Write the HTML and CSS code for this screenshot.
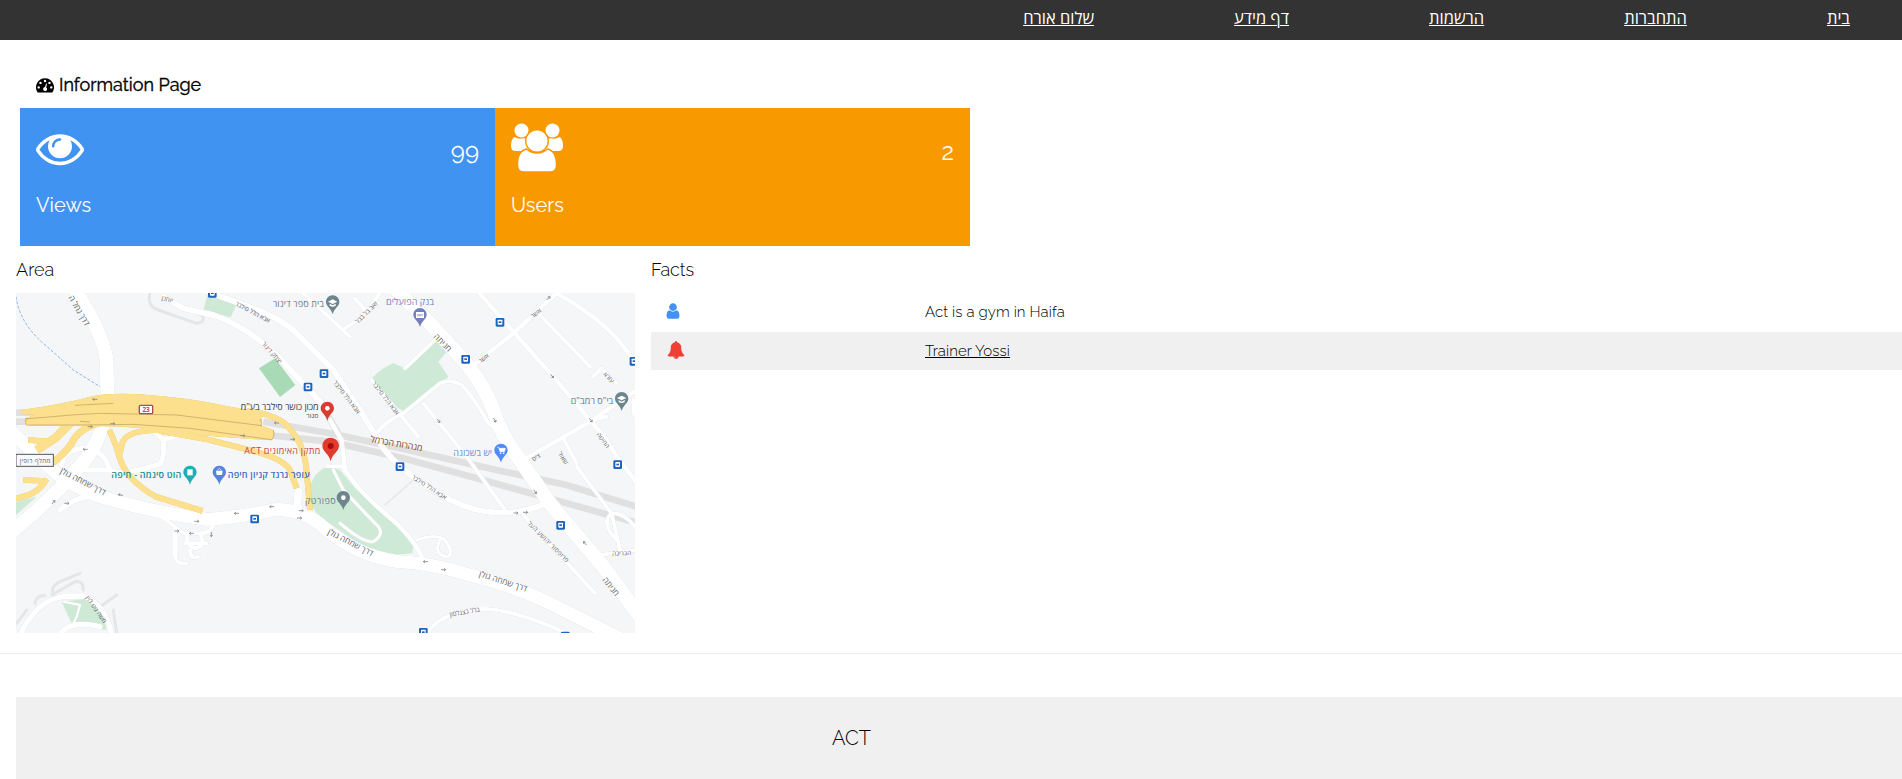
FILE: index.html
```html
<!DOCTYPE html>
<html lang="en">
<head>
<meta charset="utf-8">
<title>Information Page</title>
<link rel="stylesheet" href="styles.css">
</head>
<body>
<nav class="nav" dir="rtl">
  <a class="n1" href="#">בית</a>
  <a class="n2" href="#">התחברות</a>
  <a class="n3" href="#">הרשמות</a>
  <a class="n4" href="#">דף מידע</a>
  <a class="n5" href="#">שלום אורח</a>
</nav>

<header class="title">
  <svg class="dash" viewBox="0 0 18 15"><path fill-rule="evenodd" d="M9 .3A9 9 0 0 0 1.500 14.200Q1.700 14.600 2.200 14.600H15.800Q16.300 14.600 16.500 14.200A9 9 0 0 0 9 .3zM9 1.800a1.200 1.200 0 1 1 0 2.400 1.200 1.200 0 0 1 0-2.400zM4.500 3.700a1.200 1.200 0 1 1 0 2.400 1.200 1.200 0 0 1 0-2.400zM13.500 3.700a1.200 1.200 0 1 1 0 2.400 1.200 1.200 0 0 1 0-2.400zM2.700 8.200a1.200 1.200 0 1 1 0 2.400 1.200 1.200 0 0 1 0-2.400zM15.300 8.200a1.200 1.200 0 1 1 0 2.400 1.200 1.200 0 0 1 0-2.400zM10.100 5.500 11 5.800 10.200 9.400a2 2 0 1 1-1.200-.3z"/></svg>
  <h5>Information Page</h5>
</header>

<section class="cards">
  <div class="card blue">
    <div class="card-top">
      <svg class="eye" viewBox="0 0 1792 1792"><path d="M1664 960q-152-236-381-353 61 104 61 225 0 185-131.500 316.500t-316.500 131.500-316.500-131.500-131.500-316.500q0-121 61-225-229 117-381 353 133 205 333.500 326.500t434.500 121.500 434.500-121.500 333.500-326.500zm-720-384q0-20-14-34t-34-14q-125 0-214.500 89.500t-89.500 214.500q0 20 14 34t34 14 34-14 14-34q0-86 61-147t147-61q20 0 34-14t14-34zm848 384q0 34-20 69-140 230-376.500 368.500t-499.500 138.500-499.500-139-376.500-368q-20-35-20-69t20-69q140-229 376.500-368t499.500-139 499.500 139 376.500 368q20 35 20 69z"/></svg>
      <span class="num">99</span>
    </div>
    <h4 class="views">Views</h4>
  </div>
  <div class="card orange">
    <div class="card-top">
      <svg class="users" viewBox="0 0 52 49">
        <circle cx="10.500" cy="7.500" r="7"/><circle cx="41.500" cy="7.500" r="7"/>
        <path class="shoulders" d="M3.500 14Q7 16.500 12 15.300L18 16V28H4.500Q0 28 0 23Q0 16 3.500 14zM48.500 14Q45 16.500 40 15.300L34 16V28H47.500Q52 28 52 23Q52 16 48.500 14z"/>
        <path class="cut" d="M15.500 26Q20 30 26 30Q32 30 36.500 26Q45.500 28 45.500 42Q45.500 49 39 49H13Q6.500 49 6.500 42Q6.500 28 15.500 26z"/>
        <circle class="cut" cx="26" cy="18" r="11.300"/>
      </svg>
      <span class="num two">2</span>
    </div>
    <h4>Users</h4>
  </div>
</section>

<section class="info">
  <div class="area">
    <h5 class="sub">Area</h5>
    <svg class="map" viewBox="48 879 1857 1020">
      <defs>
        <symbol id="pin" viewBox="0 0 40 58" overflow="visible"><path d="M20 0C8 0 0 9 0 20C0 34 16 38 20 57C24 38 40 34 40 20C40 9 32 0 20 0z"/></symbol>
        <g id="bus"><rect x="-13" y="-13" width="26" height="26" rx="4" fill="#1c64c0"/><rect x="-7" y="-8" width="14" height="15" rx="2" fill="#fff"/><rect x="-4" y="-3" width="8" height="5" fill="#1c64c0"/></g>
        <path id="arr" d="M-7 0H7M2-4L7 0L2 4" fill="none" stroke="#80868b" stroke-width="2.500"/>
      </defs>
      <rect x="48" y="879" width="1857" height="1020" fill="#f5f6f7"/>
      <g fill="#ceead6">
        <path d="M622 885L655 880L712 910L692 952L610 930z"/>
        <path d="M1305 1020L1340 1055L1315 1085L1345 1130L1225 1238L1195 1225L1115 1135Q1150 1100 1180 1090L1215 1105z"/>
        <path d="M985 1400L1020 1410L1070 1470L1160 1540L1240 1630L1238 1660L1180 1665L1090 1640L960 1550Q920 1510 930 1460Q945 1410 985 1400z"/>
        <path d="M185 1805L265 1795Q320 1840 318 1890L215 1870z"/><path d="M48 1505L110 1490L48 1545z"/>
      </g>
      <path d="M825 1075L886 1155L840 1191L777 1105z" fill="#a8dab5"/>
      <path class="dashes" d="M48 890Q60 970 130 1030L220 1110L300 1160"/>
      <g class="tunnel"><path d="M48 1238H100M48 1265H100M790 1265L990 1300L1200 1345L1500 1412L1700 1455L1910 1520M800 1305L990 1325L1210 1375L1430 1435L1910 1568"/><path d="M985 1250L1015 1300" /></g>
      <g class="thin"><path d="M450 880Q440 920 475 930L590 970Q620 965 605 945L520 910M240 1720L180 1745Q150 1760 160 1785M155 1785L225 1745Q250 1740 250 1770M105 1810Q110 1785 135 1787M350 1785L300 1820M340 1830L350 1900M50 1870L80 1830"/><path stroke-width="4" d="M1155 1515L1240 1440"/></g>
      <g class="roads">
        <path stroke-width="42" d="M222 865Q310 1000 320 1080L322 1200Q315 1290 270 1360Q200 1460 30 1600"/>
        <path stroke-width="40" d="M40 1300Q90 1350 160 1412Q200 1450 300 1490Q470 1540 620 1558Q700 1555 830 1528Q920 1530 980 1590Q1080 1670 1190 1684Q1300 1690 1410 1725Q1560 1760 1710 1840L1870 1920"/>
        <path stroke-width="44" d="M1185 865L1290 970L1390 1080Q1450 1150 1480 1230Q1500 1300 1560 1380L1650 1510L1810 1700L1920 1850"/>
        <path stroke-width="18" d="M490 890L550 925L640 945Q740 980 830 1065L965 1210M650 885L760 925Q850 960 890 1000L1000 1110L1080 1230L1150 1345Q1200 1410 1270 1450Q1380 1530 1480 1537Q1560 1545 1640 1510"/>
        <path stroke-width="14" d="M1430 870L1540 995L1660 1130L1770 1260Q1830 1330 1850 1370L1920 1460M1415 1100L1540 1000L1680 870M1670 880Q1760 930 1820 985Q1860 1020 1920 1110M1570 1380L1770 1265L1910 1170"/>
        <path stroke-width="12" d="M1615 940L1770 1100M900 870L1050 1010M1035 985Q1110 940 1140 875M1065 895L1100 935M1215 1105L1310 1015M1130 1300Q1160 1260 1210 1240L1320 1150Q1350 1135 1385 1155Q1420 1190 1465 1270Q1490 1290 1520 1290M1115 1140L1255 1310M1270 1210L1400 1370L1515 1530M1570 1545L1785 1780M1280 1900Q1320 1840 1430 1828Q1520 1820 1690 1895M1780 1130L1805 1105L1850 1150M1690 1315L1730 1390M1770 1260L1820 1250M1730 1400L1835 1540L1860 1650M1835 1540Q1800 1570 1850 1620M1835 1540Q1880 1540 1910 1590M1800 1665L1910 1650M1900 1200V1240L1930 1280"/>
        <path stroke-width="14" d="M990 1260L1025 1320L1035 1410Q1080 1480 1190 1570Q1250 1630 1270 1680"/>
        <path stroke-width="10" d="M1250 1620Q1310 1600 1335 1620Q1370 1670 1335 1670Q1300 1660 1320 1620M980 1400H1030M1000 1410L1030 1470L1125 1570Q1160 1600 1120 1625Q1090 1630 1020 1570"/>
        <path stroke-width="12" d="M485 1550L550 1600H600Q635 1600 640 1570M525 1590L525 1670Q530 1695 560 1690M560 1605Q560 1640 585 1645Q620 1640 600 1600M555 1630H620M570 1650Q570 1680 595 1670M895 1470L890 1520"/>
        <path stroke-width="16" d="M60 1905Q110 1800 190 1790H255Q320 1820 335 1905M185 1895Q220 1860 300 1880"/>
        <path stroke-width="7" d="M190 1805L240 1815L230 1850L215 1880"/>
        <path stroke-width="16" d="M185 1395Q190 1350 250 1345Q310 1345 330 1410M460 1290L490 1320L535 1305M490 1320Q495 1395 470 1395Q360 1430 330 1410H260M180 1530Q230 1485 290 1490"/>
        <path stroke-width="24" d="M225 1400L150 1500L40 1590M895 1475L890 1530"/>
      </g>
      <g class="yellow">
        <path d="M62 1230Q180 1215 280 1188Q340 1177 420 1183Q560 1192 690 1220L780 1235Q790 1265 780 1275L820 1290Q825 1310 815 1321L600 1306Q400 1275 250 1278H80Q70 1265 78 1254L105 1244L65 1242z"/>
        <path class="ramp" stroke-width="17" d="M740 1233Q838 1245 868 1285Q910 1330 918 1395L930 1530M478 1293L620 1318L748 1350Q850 1375 870 1410L890 1465M328 1290Q345 1325 358 1370Q378 1440 468 1490L608 1533M478 1290Q385 1290 368 1325L358 1365M85 1320L150 1325M40 1495Q110 1490 140 1437M70 1440L140 1443"/>
        <path class="ramp" stroke-width="25" d="M318 1200Q250 1225 215 1265L165 1315L110 1350"/>
        <path class="ramp" stroke-width="20" d="M300 1268Q235 1285 215 1330Q195 1360 158 1388"/>
      </g>
      <path class="seams" d="M75 1257L215 1245L300 1240L530 1245L785 1277M85 1275L250 1275L400 1273L570 1285L815 1319M225 1216L340 1210M240 1264L270 1266M780 1257Q790 1275 780 1278M820 1290Q826 1308 815 1319M84 1254Q70 1265 82 1275"/>
      <g><rect x="418" y="1216" width="40" height="25" rx="3" fill="#fff" stroke="#b34555" stroke-width="4"/><text x="438" y="1236" class="shield">23</text></g>
      <g><rect x="48" y="1363" width="112" height="36" fill="#f8f9fa" stroke="#555" stroke-width="3"/><text x="105" y="1388" class="road" textLength="92">מחלף רופין</text></g>

      <use href="#arr" transform="translate(285 1198) rotate(180)"/><use href="#arr" transform="translate(270 1280)"/><use href="#arr" transform="translate(338 1271)"/><use href="#arr" transform="translate(728 1307)"/><use href="#arr" transform="translate(830 1269) rotate(185)"/><use href="#arr" transform="translate(878 1318)"/><use href="#arr" transform="translate(256 1348) rotate(180)"/><use href="#arr" transform="translate(362 1485) rotate(190)"/><use href="#arr" transform="translate(590 1564)"/><use href="#arr" transform="translate(710 1540) rotate(180)"/><use href="#arr" transform="translate(816 1520) rotate(180)"/><use href="#arr" transform="translate(898 1554)"/><use href="#arr" transform="translate(903 1532)"/><use href="#arr" transform="translate(1277 1685) rotate(180)"/><use href="#arr" transform="translate(1330 1709)"/><use href="#arr" transform="translate(1547 1539)"/><use href="#arr" transform="translate(1576 1537)"/><use href="#arr" transform="translate(1605 1475) rotate(55)"/><use href="#arr" transform="translate(1755 1630) rotate(230)"/><use href="#arr" transform="translate(1484 1260) rotate(60)"/><use href="#arr" transform="translate(1315 1262) rotate(50)"/><use href="#arr" transform="translate(1656 1128) rotate(50)"/><use href="#arr" transform="translate(1772 1260) rotate(50)"/><use href="#arr" transform="translate(1645 895) rotate(-45)"/><use href="#arr" transform="translate(530 1593)"/><use href="#arr" transform="translate(575 1600) rotate(180)"/><use href="#arr" transform="translate(634 1603) rotate(90)"/><use href="#arr" transform="translate(200 1510)"/><use href="#arr" transform="translate(160 1507) rotate(-50)"/>

      <use href="#bus" x="637" y="880"/><use href="#bus" x="972" y="1121"/><use href="#bus" x="924" y="1161"/><use href="#bus" x="1500" y="967"/><use href="#bus" x="1397" y="1078"/><use href="#bus" x="1902" y="1084"/><use href="#bus" x="764" y="1557"/><use href="#bus" x="1200" y="1400"/><use href="#bus" x="1853" y="1394"/><use href="#bus" x="1682" y="1576"/><use href="#bus" x="1270" y="1897"/><use href="#bus" x="1696" y="1908"/>

      <use href="#pin" x="978" y="886" width="40" height="58" fill="#6f858e"/><path d="M984 905L998 898L1012 905L998 912zM989 911V917Q998 923 1007 917V911L998 916z" fill="#fff"/>
      <use href="#pin" x="1240" y="924" width="40" height="58" fill="#7380bd"/><rect x="1248" y="936" width="24" height="18" fill="#fff"/><path d="M1254 942V949M1260 942V949M1266 942V947" stroke="#7380bd" stroke-width="3"/>
      <use href="#pin" x="1845" y="1176" width="40" height="58" fill="#6f858e"/><path d="M1851 1194L1865 1187L1879 1194L1865 1201zM1856 1200V1206Q1865 1212 1874 1206V1200L1865 1205z" fill="#fff"/>
      <use href="#pin" x="1483" y="1331" width="40" height="58" fill="#4f8df5"/><path d="M1492 1342H1496L1500 1355H1513L1516 1345H1498" fill="#fff" stroke="#fff" stroke-width="2"/><circle cx="1502" cy="1360" r="2.500" fill="#fff"/><circle cx="1511" cy="1360" r="2.500" fill="#fff"/>
      <use href="#pin" x="962" y="1205" width="40" height="58" fill="#dc3b30"/><circle cx="982" cy="1225" r="7" fill="#fff"/>
      <use href="#pin" x="967" y="1313" width="50" height="72" fill="#e33a2e"/><circle cx="992" cy="1338" r="9" fill="#a50e0e"/>
      <use href="#pin" x="550" y="1397" width="40" height="58" fill="#22acb5"/><rect x="562" y="1408" width="16" height="18" fill="#fff"/>
      <use href="#pin" x="638" y="1397" width="40" height="58" fill="#5583df"/><path d="M648 1412H668L666 1425H650z" fill="#fff"/><path d="M653 1412Q658 1398 663 1412" fill="none" stroke="#fff" stroke-width="2"/>
      <use href="#pin" x="1010" y="1473" width="40" height="58" fill="#6f858e"/><circle cx="1030" cy="1493" r="7" fill="#fff"/>

      <g class="label" font-size="27">
        <text x="895" y="922" fill="#6b7c84" textLength="154">בית ספר דינור</text>
        <text x="1230" y="916" fill="#7580b6" textLength="144">בנק הפועלים</text>
        <text x="839" y="1229" fill="#3c4043" textLength="234">מכון כושר סילבר בע"מ</text>
        <text x="937" y="1253" fill="#555" font-size="21">סגור</text>
        <text x="847" y="1362" fill="#c44743" textLength="228">מתקן האימונים ACT</text>
        <text x="1418" y="1368" fill="#5590e0" textLength="116">יש בשכונה</text>
        <text x="1776" y="1212" fill="#6b7c84" textLength="128">בי"ס רמב"ם</text>
        <text x="439" y="1435" fill="#178b91" font-weight="600" textLength="210">הוט סינמה - חיפה</text>
        <text x="806" y="1433" fill="#3b6cc0" font-weight="600" textLength="246">עופר גרנד קניון חיפה</text>
        <text x="961" y="1513" fill="#6b7c84" textLength="92">ספורטק</text>
        <text transform="translate(1188 1340) rotate(10)" fill="#8a4b1c" textLength="158">מנהרות הכרמל</text>
      </g>
      <g class="label road">
        <text class="big" transform="translate(230 936) rotate(60)" textLength="100">דרך נחל ה</text>
        <text class="big" transform="translate(245 1452) rotate(27)" textLength="150">דרך שמחה גולן</text>
        <text class="big" transform="translate(1048 1635) rotate(27)" textLength="150">דרך שמחה גולן</text>
        <text class="big" transform="translate(1507 1752) rotate(18)" textLength="150">דרך שמחה גולן</text>
        <text class="big" transform="translate(1322 1034) rotate(45)">חניתה</text>
        <text class="big" transform="translate(1826 1765) rotate(52)">חניתה</text>
        <text transform="translate(500 904) rotate(15)">יוחנן</text>
        <text transform="translate(755 942) rotate(28)" textLength="115">אבא הלל סילבר</text>
        <text transform="translate(811 1062) rotate(48)">יצחק דינור</text>
        <text transform="translate(1035 1195) rotate(52)" textLength="120">אבא הלל סילבר</text>
        <text transform="translate(1152 1198) rotate(52)" textLength="120">אבא הלל סילבר</text>
        <text transform="translate(1284 1467) rotate(33)" textLength="120">אבא הלל סילבר</text>
        <text transform="translate(1104 942) rotate(-45)">זאב בל בבל</text>
        <text transform="translate(1455 1080) rotate(-38)">אשר</text>
        <text transform="translate(1612 945) rotate(-38)">אשר</text>
        <text transform="translate(1822 1137) rotate(45)">עזרא</text>
        <text transform="translate(1804 1325) rotate(55)">החיטה</text>
        <text transform="translate(1612 1377) rotate(-35)">ציס</text>
        <text transform="translate(1684 1378) rotate(55)">שאול</text>
        <text transform="translate(1640 1630) rotate(45)" textLength="165">פרופסור יהושע העל</text>
        <text transform="translate(1395 1842) rotate(-10)">ברל כצנלסון</text>
        <text transform="translate(1865 1666) rotate(-3)">הבריכה</text>
        <text transform="translate(283 1832) rotate(55)">משה גוט לוין</text>
      </g>
    </svg>
  </div>
  <div class="facts">
    <h5 class="sub">Facts</h5>
    <div class="row">
      <svg class="ico" viewBox="0 0 1792 1792" fill="#4192f2"><path d="M1536 1399q0 109-62.500 187t-150.500 78h-854q-88 0-150.500-78t-62.500-187q0-85 8.500-160.500t31.500-152 58.500-131 94-89 134.500-34.500q131 128 313 128t313-128q76 0 134.500 34.500t94 89 58.500 131 31.500 152 8.500 160.500zm-256-887q0 159-112.500 271.500t-271.500 112.500-271.500-112.500-112.500-271.500 112.500-271.500 271.500-112.500 271.500 112.500 112.500 271.500z"/></svg>
      <span class="act-is">Act is a gym in Haifa</span>
    </div>
    <div class="row striped">
      <svg class="ico bell" viewBox="0 0 1792 1792" fill="#ee4035"><path d="M912 1696q0-16-16-16-59 0-101.500-42.500t-42.500-101.500q0-16-16-16t-16 16q0 73 51.500 124.500t124.500 51.500q16 0 16-16zm816-288q0 52-38 90t-90 38h-448q0 106-75 181t-181 75-181-75-75-181h-448q-52 0-90-38t-38-90q50-42 91-88t85-119.500 74.500-158.500 50-206 19.500-260q0-152 117-282.500t307-158.500q-8-19-8-39 0-40 28-68t68-28 68 28 28 68q0 20-8 39 190 28 307 158.500t117 282.500q0 139 19.500 260t50 206 74.500 158.500 85 119.500 91 88z"/></svg>
      <a class="trainer" href="#">Trainer Yossi</a>
    </div>
  </div>
</section>

<hr>
<footer><h4>ACT</h4></footer>
</body>
</html>
```
FILE: styles.css
```css
* { box-sizing: border-box; }
html, body { height: 779px; overflow: hidden; }
body { margin: 0; background: #fff; color: #000; font-family: Raleway, Lato, "Open Sans", sans-serif; }
h4, h5 { margin: 0; font-weight: 400; white-space: nowrap; }
svg { display: block; flex: none; }

.nav { height: 40px; background: #333; display: flex; gap: 140px; padding: 6px 52px 0; font: 500 16.500px/24px "Open Sans", "Noto Sans", sans-serif; }
.nav a { color: #fff; text-decoration: underline; text-decoration-thickness: 1px; text-underline-offset: 1px; white-space: nowrap; }

.title { height: 68px; padding: 30px 0 0 36px; display: flex; align-items: flex-start; gap: 5px; }
.title h5 { font-size: 18px; line-height: 30px; -webkit-text-stroke: .35px #000; }
.dash { width: 18px; height: 15px; margin-top: 8px; }

.cards { display: flex; margin-left: 20px; height: 138px; }
.card { width: 475px; padding: 15px 16px 0; color: #fff; }
.blue { background: #4193f2; }
.orange { background: #f89900; }
.card-top { display: flex; justify-content: space-between; align-items: flex-start; height: 64px; }
.card svg { fill: #fff; }
.eye { width: 48px; height: 48px; margin-top: 1px; }
.users { width: 52px; height: 49px; }
.cut { stroke: #f89900; stroke-width: 1.4; }
.num { font-size: 24px; line-height: 36px; margin-top: 11px; }
.card h4 { font-size: 20px; line-height: 36px; }

.info { display: flex; padding-left: 16px; gap: 16px; height: 407px; }
.sub { font-size: 18px; line-height: 27px; height: 47px; padding-top: 10px; font-weight: 300; }
.area { width: 619px; }
.map { width: 619px; height: 340px; }
.facts { flex: 1; }
.row { height: 38px; padding-left: 16px; display: grid; grid-template-columns: 258px 1fr; align-items: center; font-size: 15px; font-weight: 300; letter-spacing: .08px; }
.facts .sub + .row { margin-top: -1px; height: 40px; padding-bottom: 1px; }
.striped { background: #f0f0f0; }
.ico { width: 18px; height: 18px; margin-left: -3px; margin-top: -2px; }
.bell { margin-left: 0; margin-top: -3px; }
.row a { color: #000; }

hr { margin: 0; border: 0; height: 1px; background: #eee; }
footer { margin: 43px 0 0 16px; height: 82px; background: #f0f0f0; padding: 24px 0 0 816px; }
footer h4 { font-size: 20px; line-height: 34px; font-weight: 300; }

.dashes { fill: none; stroke: #8fb4ef; stroke-width: 3; stroke-dasharray: 9 5; }
.tunnel { fill: none; stroke: #e0e0e0; stroke-width: 20; }
.thin { fill: none; stroke: #e4e6e8; stroke-width: 9; stroke-linecap: round; }
.roads { fill: none; stroke: #fff; stroke-linejoin: round; stroke-linecap: round; filter: drop-shadow(0 0 2px #c3c7cc); }
.yellow { fill: #fce08e; filter: drop-shadow(0 0 1px #e5b84d); }
.ramp { fill: none; stroke: #fce08e; stroke-linejoin: round; }
.seams { fill: none; stroke: #a08b50; stroke-width: 1.5; }
.label text, .road { font-family: "Open Sans", "Noto Sans", sans-serif; text-anchor: middle; direction: rtl; }
.road { fill: #5f6368; font-size: 19px; }
.big { font-size: 25px; }
.shield { font: bold 19px "Open Sans", sans-serif; fill: #b34555; text-anchor: middle; }
```
